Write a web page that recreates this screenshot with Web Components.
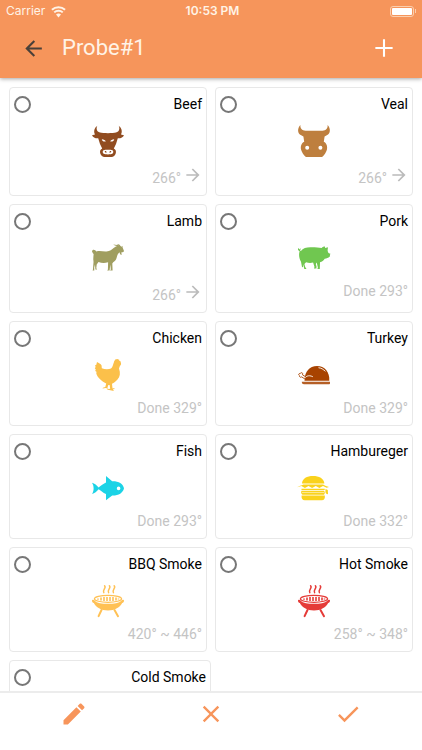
<!DOCTYPE html>
<html lang="en">
<head>
<meta charset="utf-8">
<meta name="viewport" content="width=device-width, initial-scale=1">
<title>Probe#1</title>
<style>
  html, body { height: 100%; }
  body { margin: 0; background: #fff; color: #000; font-family: Roboto, "Noto Sans", sans-serif; }
</style>
</head>
<body>
<probe-app></probe-app>
<script>
const define = (name, html, setup) => {
  const template = document.createElement('template');
  template.innerHTML = html;
  customElements.define(name, class extends HTMLElement {
    constructor() {
      super();
      this.attachShadow({ mode: 'open' }).append(template.content.cloneNode(true));
    }
    connectedCallback() { if (setup) setup(this, this.shadowRoot); }
  });
};

const grill = `
  <g fill="none" stroke="currentColor" stroke-linecap="round">
    <path stroke-width="1.5" d="M12.600.8c2.200 1.700-2.600 4.200-.8 6.800M17.400.8c2.200 1.700-2.600 4.200-.8 6.800M22.200.8c2.200 1.700-2.600 4.200-.8 6.800"/>
    <ellipse cx="16" cy="13.800" rx="13.600" ry="3.500" stroke-width="1.200"/>
    <path d="M9.500 25 6.600 31.200M22.500 25l3.500 6.200" stroke-width="2"/>
    <path d="M6 13.500v1.300M9 12.500v3M12 12v4M15 12v4M18 12v4M21 12v4M24 12.500v3M26.500 13.500v1" stroke-width="1.600" stroke-linecap="butt"/>
  </g>
  <path d="M0 15.200c1-.8 1.800-.6 2.600.2C5 18 10 18.800 16 18.800s11-.8 13.400-3.400c.8-.8 1.600-1 2.600-.2.2 1.600-.6 2.500-1.800 2.700C28 22 23 25.400 16 25.400S4 22 1.800 17.900C.6 17.700-.2 16.800 0 15.200z"/>`;

const glyphs = {
  back: [24, '<path d="M20 11v2H8l5.500 5.500-1.420 1.420L4.160 12l7.920-7.920L13.500 5.500 8 11h12z"/>'],
  forward: [24, '<path d="M4 11v2h12l-5.500 5.500 1.420 1.420L19.840 12l-7.920-7.920L10.500 5.500 16 11H4z"/>'],
  plus: [24, '<path d="M19.400 12.900h-6.500v6.500h-1.800v-6.500H4.600v-1.800h6.500V4.600h1.800v6.500h6.500z"/>'],
  pencil: [24, '<path d="M20.710 7.040c.39-.39.39-1.040 0-1.410l-2.340-2.340c-.37-.39-1.020-.39-1.410 0l-1.840 1.830 3.750 3.750M3 17.250V21h3.750L17.810 9.930l-3.750-3.750L3 17.250z"/>'],
  close: [24, '<path d="M19 6.410 17.590 5 12 10.590 6.410 5 5 6.410 10.590 12 5 17.590 6.410 19 12 13.410 17.590 19 19 17.590 13.410 12 19 6.410z"/>'],
  check: [24, '<path d="M21 7 9 19l-5.500-5.500 1.410-1.410L9 16.170 19.590 5.590 21 7z"/>'],
  wifi: [24, '<path d="M12 21.500l4-4.700a6 6 0 0 0-8 0z"/><path d="M1.500 9.200a15.500 15.500 0 0 1 21 0M5.200 13.400a10 10 0 0 1 13.600 0" fill="none" stroke="currentColor" stroke-width="3.200"/>'],
  beef: [32, `<path fill-rule="evenodd" d="M5.300.8C4 3.500 4.500 6.500 8 7.600c3 .7 13 .7 16 0 3.500-1.100 4-4.100 2.700-6.800 3 2.200 3.900 5.700 2.300 8.700l3 .7c-.8 2.200-3 3.200-6.200 3.100L24 19l-2.200 4.400c2 .9 2.600 3 1.900 5.200-.8 2.300-2.200 3.400-4.200 3.400h-7c-2 0-3.400-1.100-4.200-3.400-.7-2.200-.1-4.300 1.900-5.200L8 19l-1.800-5.700C3 13.400.8 12.400 0 10.200l3-.7C1.400 6.500 2.300 3 5.300.8zM9.800 14.300c.3 1.800 1.700 2.500 4 2.200-.6-1.300-1.900-2-4-2.200zm12.400 0c-2.100.2-3.400.9-4 2.200 2.300.3 3.700-.4 4-2.200zM11.500 25.200c-1.200.6-1 2.600.2 3.600 1.500.8 7.100.8 8.600 0 1.200-1 1.400-3 .2-3.600-2.200-.6-6.800-.6-9 0zm1.300 1c1.200-.3 1.800.3 1.800 1.400-1.200.2-2-.4-1.800-1.400zm6.400 0c.2 1-.6 1.600-1.800 1.400 0-1.100.6-1.700 1.800-1.400z"/>`],
  veal: [32, `<path fill-rule="evenodd" d="M2.400 0C2 3.400 4 5.700 7.500 5.700h17C28 5.700 30 3.400 29.600 0c3.200 3.500 3.100 8.500-.8 10.300L26.600 11.500l-.8 5.300c2.700 1.300 4 4.500 3.100 8-.9 3-2.500 5.300-4.800 7.200H7.900c-2.300-1.900-3.900-4.200-4.800-7.200-.9-3.500.4-6.700 3.100-8l-.8-5.300-2.200-1.200C-.7 8.500-.8 3.500 2.400 0zM9.200 20.700a2 2 0 1 0 0 4 2 2 0 0 0 0-4zm13.200 0a2 2 0 1 0 0 4 2 2 0 0 0 0-4z"/>`],
  lamb: [32, `<path d="M0 9.400C.2 7.700 1.800 7.300 3.200 8.300l1.200 1.100C8 8.200 11 9.700 14.500 9.400c3.600-.2 5.300-1.800 7.500-3.700 1-.8 2-1.400 3-1.700-1.500-.2-2.800-.6-3.800-1.400 2.600.5 4.800.2 5.400.9-.3-.7-1.100-1.200-2.200-1.600 2.300-.1 3.600.6 4.100 2l1.200.8.8-1 .1 1.700 1.400 3.600c-.2.9-1.200 1.300-2.600 1.200l.2 2.900c-1.300-.5-1.900-1.500-2-2.900-1.400 1-2.300 2.800-2.900 5.300-.5 2-1.500 3.500-3.500 4.700l-.9 1.200.3 7.200h-2.600l.8-1.200-.5-4.800-.7 6h-2.400l.7-1.200.2-7.200c-3.500 1.200-6.600.9-9.600-.2l-1.800 2.400-.4 3.800.9 1.200H3.400L3 22.600l-.8 3 .1 3H.6l.4-1.400c-.1-2.900.8-5.700.4-8.700-.4-2.700.3-5.300.3-7.800l-.3 1.600L0 9.400z"/>`],
  pork: [32, `<path d="M0 6.500l.8-.3.5 1.200.9-1 .6.4-.8 1.700.9.5C5.200 5.800 9 5 13.600 5.200c4.200 0 7.300.3 10.100.8.800-1.100 2-1.600 3.200-1.500l.2 1.600 2.900-.9-.4 3 .4 2.100c.5.900 1.300 1.200 2.300 1.300l-.6 3.200c-1.500.9-3 1.800-5 2-1 1.800-2.700 3-4.700 3.500l-.2 6.600h-2.400l.5-1.300-1.200-5.100-.9 1.500.7 2.600-.1 2h-2.500l.6-1.500-1.400-4.500c-2.600.7-5 .4-7-.3l-1.700 1.600.8 3.200 1.300 1.900H6.300l-1-4.700-.3 3-1-.4-1-5.200C1 16.200.6 12.300 1.600 9.200L0 8z"/>`],
  chicken: [32, `<path d="M5 3c1.700.9 3.700 1.800 4.600 3.500L9.800 9.300c3 1.200 7 1.200 9.200.2 1.900-1.600 2-4.300 3-6.600.2-1.400 1.100-1.700 1.500-2.700.9.300 1.200-.5 1.900-.2l.8.400.9.100.2 1.200 1.200.6c.1 1 .8 1.600.5 3.300l-1.200 1.700-.8 2.100c1.600 4.400 1.100 8.300-1.500 11.200-1.600 1.700-3.500 3.300-5.500 4.200l.5 4.700c1.200-.5 2.200-.2 2.400.6l-2 .2 1 1.700-4.800-1-2-.2.2-.6 2.900-.4-.6-3.900h-1.200l-1 2.500 1 1.400-2.800-.8-3 .6.300-.9 2.400-.8.9-3.500C9.300 22 5.500 18.500 4.300 14.500l.2-1.800-1.300-.8.600-1.300-1-1.300.9-1.200L3 6.600l1.300-.9z"/>`],
  turkey: [32, `<path d="M6.500 21.800C6.600 12.500 11.500 7 19 7c7.600 0 12.800 5.800 12.300 14.800z"/><path d="M3.800 22.700H32v1.500c0 .7-.5 1-1.200 1H6c-1.400 0-2.200-.8-2.200-2.500z" opacity=".85"/><path d="M6.200 20.500c.8-3 4.200-5 8.600-2.800M20.500 8.700c2.500.3 5 1.500 6.800 3.700" fill="none" stroke="#fff" stroke-width=".9"/><path d="M8.700 18.500 4.500 15.800c.8-1.800-.9-2.900-2.100-1.500-1.800 0-2.300 1.800-.9 2.400-.2 1.500 1.200 2 2.200 1.200l3.700 2.400" fill="none" stroke="currentColor" stroke-width=".9"/>`],
  fish: [32, `<path fill-rule="evenodd" d="M0 10.700c2.600.7 4.900 2.500 6.600 4.700 1.900-1.300 4.300-3.600 7.400-4.900V4l6.200 5.200C26.400 9 31 11.600 32 16.200 31 21 26.400 23.700 20.200 23.500L14 28.200v-6.100c-3.100-1.400-5.500-3.700-7.400-4.900C4.900 19.400 2.600 21.300 0 22c1.200-1.900 1.600-3.700 1.600-5.600S1.200 12.600 0 10.700zM26.600 14.600a1.800 1.800 0 1 0 0 3.600 1.800 1.800 0 0 0 0-3.600z"/>`],
  burger: [32, `<path d="M4 11.600C4.300 6.400 9 4 15 4s11 2.400 11.400 7.600zM-1 15.300c2-.9 4.500-2 6.400-2.800H25c1.700.9 4 2.100 6 2.600l-2.300.7-3.700-1.700-3.600 1.800-3.600-1.800-3.700 1.800-3.600-1.800-3.600 1.800-3.500-1.800z"/><path d="M3.500 16.800h23.200v1.300H3.500zM3.500 18.700H26c1 1.300 1 2.700 0 4H4.500c-1.400-1-1.700-2.600-1-4zM3.600 23.500H26.800c.5 3-.7 4.700-3 4.700H6.800c-2.400 0-3.600-1.700-3.200-4.700zM27.500 16.900l2.300 1 .2 4.200c-1.500.2-2.200-.8-2.600-2.200z"/><path d="M4 20.500h22" stroke="#fff" stroke-width=".5"/>`],
  grill: [32, grill],
};

define('app-icon', `
  <style>
    :host { display: block; flex: none; width: var(--icon-size, 24px); height: var(--icon-size, 24px); }
    svg { display: block; width: 100%; height: 100%; fill: currentColor; overflow: visible; }
  </style>
  <svg aria-hidden="true"></svg>`, (host, root) => {
  const [box, art] = glyphs[host.getAttribute('name')];
  const svg = root.querySelector('svg');
  svg.setAttribute('viewBox', `0 0 ${box} ${box}`);
  svg.innerHTML = art;
});

define('status-bar', `
  <style>
    :host { display: grid; grid-template-columns: 1fr auto 1fr; align-items: center; height: 22px;
      padding: 0 6px; color: #fff3e6; font: 12px/22px Inter, sans-serif; }
    .carrier { display: flex; align-items: center; gap: 6px; --icon-size: 15px; }
    .time { padding-left: 3px; font-weight: 600; }
    .battery { justify-self: end; display: flex; align-items: center; gap: 1px; }
    .cell { box-sizing: border-box; width: 24px; height: 11px; padding: 1px; border: 1px solid #fbcfae; border-radius: 3px; }
    .cell::before { content: ""; display: block; height: 100%; border-radius: 1px; background: #fff; }
    .tip { width: 1px; height: 4px; background: #fbcfae; }
  </style>
  <span class="carrier"><slot name="carrier"></slot><app-icon name="wifi"></app-icon></span>
  <span class="time"><slot name="time"></slot></span>
  <span class="battery"><span class="cell"></span><span class="tip"></span></span>`);

define('title-bar', `
  <style>
    :host { display: flex; align-items: center; height: 52px; padding: 0 20px 4px; color: #fff3e6; }
    h1 { flex: 1; margin: 0 0 0 16px; font-size: 22px; line-height: 28px; font-weight: 400; }
    button { display: grid; place-items: center; width: 36px; height: 36px; margin: 0; padding: 0; border: 0;
      background: none; color: inherit; }
    .back { width: 26px; color: #4a4039; --icon-size: 25px; }
    .add { --icon-size: 28px; color: #fff; }
  </style>
  <button class="back" type="button" aria-label="Back"><app-icon name="back"></app-icon></button>
  <h1><slot></slot></h1>
  <button class="add" type="button" aria-label="Add"><app-icon name="plus"></app-icon></button>`);

define('food-card', `
  <style>
    :host { display: block; box-sizing: border-box; padding: 4px; border: 1px solid #e8e8e8; border-radius: 4px; background: #fff; }
    label { display: flex; align-items: center; justify-content: space-between; height: 24px; font-size: 14px; line-height: 24px; }
    input { appearance: none; box-sizing: border-box; width: 17px; height: 17px; margin: 0; border: 2px solid #777; border-radius: 50%; background: #fff; }
    input:checked { background: #f7955b; box-shadow: inset 0 0 0 2px #fff; }
    .art { display: grid; justify-content: center; margin: 9px 0 5px; --icon-size: 32px; }
    .temp { display: flex; justify-content: flex-end; align-items: flex-end; height: 24px; margin-bottom: 1px; color: #c4c4c4; font-size: 14px; line-height: 24px; }
    .temp app-icon { display: none; --icon-size: 20px; align-self: flex-start; margin: 3px -1px 0 2px; color: #bbb; }
    :host([next]) .temp { height: 28px; }
    :host([next]) .temp app-icon { display: block; }
  </style>
  <label><input type="radio"><span><slot></slot></span></label>
  <div class="art"></div>
  <div class="temp"><slot name="temp"></slot><app-icon name="forward"></app-icon></div>`, (host, root) => {
  const icon = document.createElement('app-icon');
  icon.setAttribute('name', host.getAttribute('icon'));
  icon.style.color = host.getAttribute('tint');
  root.querySelector('.art').replaceChildren(icon);
  const radio = root.querySelector('input');
  radio.onchange = () => {
    for (const card of host.parentElement.children) {
      if (card !== host) card.shadowRoot.querySelector('input').checked = false;
    }
  };
});

define('food-grid', `
  <style>
    :host { display: grid; grid-template-columns: 1fr 1fr; gap: 8px; padding: 9px; }
    ::slotted(:last-child:nth-child(odd)) { grid-column: 1 / -1; width: 50%; }
  </style>
  <slot></slot>`);

define('action-bar', `
  <style>
    :host { display: grid; grid-template-columns: repeat(3, 1fr); padding: 3px 5px 18px; border-top: 2px solid #ececec; background: #fff; }
    button { display: grid; place-items: center; height: 36px; margin: 0; padding: 0; border: 0; background: none; color: #f7955b; --icon-size: 28px; }
  </style>
  <button type="button" aria-label="Edit"><app-icon name="pencil"></app-icon></button>
  <button type="button" aria-label="Cancel"><app-icon name="close"></app-icon></button>
  <button type="button" aria-label="Confirm"><app-icon name="check"></app-icon></button>`);

const foods = [
  ['Beef', 'beef', '#914c20', '266°', true], ['Veal', 'veal', '#be7f3e', '266°', true],
  ['Lamb', 'lamb', '#a09e60', '266°', true], ['Pork', 'pork', '#70c750', 'Done 293°'],
  ['Chicken', 'chicken', '#fbc04a', 'Done 329°'], ['Turkey', 'turkey', '#a84300', 'Done 329°'],
  ['Fish', 'fish', '#1bd3e6', 'Done 293°'], ['Hambureger', 'burger', '#fad21c', 'Done 332°'],
  ['BBQ Smoke', 'grill', '#ffc155', '420° ~ 446°'], ['Hot Smoke', 'grill', '#e53b38', '258° ~ 348°'],
  ['Cold Smoke', 'grill', '#55a8e8', ''],
];

define('probe-app', `
  <style>
    :host { display: flex; flex-direction: column; height: 100%; }
    header { z-index: 1; background: #f6955b; box-shadow: 0 1px 4px rgba(0, 0, 0, .35); }
    main { flex: 1; min-height: 0; overflow-y: auto; scrollbar-width: none; }
  </style>
  <header>
    <status-bar><span slot="carrier">Carrier</span><span slot="time">10:53 PM</span></status-bar>
    <title-bar>Probe#1</title-bar>
  </header>
  <main><food-grid>${foods.map(([name, icon, tint, temp, next]) => `
    <food-card icon="${icon}" tint="${tint}"${next ? ' next' : ''}>${name}<span slot="temp">${temp}</span></food-card>`).join('')}
  </food-grid></main>
  <action-bar></action-bar>`);
</script>
</body>
</html>
